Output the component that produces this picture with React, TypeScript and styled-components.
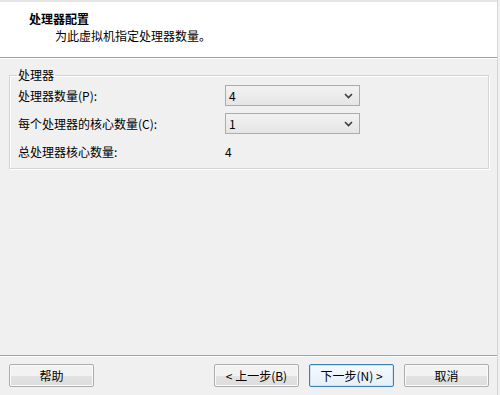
import React from 'react';
import styled, { createGlobalStyle } from 'styled-components';

const GlobalStyle = createGlobalStyle`
  html, body {
    margin: 0;
    padding: 0;
    background: #f0f0f0;
  }
  body {
    font-family: "Noto Sans CJK SC", "Noto Sans", "Liberation Sans", sans-serif;
    font-size: 12px;
    color: #000000;
  }
`;

const Chevron = () => (
  <svg width="9" height="6" viewBox="0 0 9 6">
    <path d="M1 1 L4.5 4.5 L8 1" fill="none" stroke="#3c3c3c" strokeWidth="1.6" />
  </svg>
);

const Combo = ({ value }: { value: string }) => (
  <ComboBox>
    <span>{value}</span>
    <Chevron />
  </ComboBox>
);

const App = () => (
  <Window>
    <GlobalStyle />
    <Header>
      <Title>处理器配置</Title>
      <Subtitle>为此虚拟机指定处理器数量。</Subtitle>
    </Header>
    <Body>
      <Group>
        <Legend>处理器</Legend>
        <Row>
          <Label>处理器数量(P):</Label>
          <Combo value="4" />
        </Row>
        <Row>
          <Label>每个处理器的核心数量(C):</Label>
          <Combo value="1" />
        </Row>
        <Row>
          <Label>总处理器核心数量:</Label>
          <Value>4</Value>
        </Row>
      </Group>
    </Body>
    <Footer>
      <Button>帮助</Button>
      <ButtonGroup>
        <Button>&lt; 上一步(B)</Button>
        <Button $primary>下一步(N) &gt;</Button>
        <Button>取消</Button>
      </ButtonGroup>
    </Footer>
  </Window>
);

export default App;

const Window = styled.div`
  width: 498px;
  height: 395px;
  display: flex;
  flex-direction: column;
  border-right: 1px solid #d6d6d6;
  box-sizing: border-box;
  background: #f0f0f0;
`;

const Header = styled.div`
  height: 58px;
  box-sizing: border-box;
  background: #ffffff;
  border-top: 2px solid #e6e6e6;
  border-bottom: 1px solid #a0a0a0;
  padding: 9px 0 0 29px;
  display: flex;
  flex-direction: column;
`;

const Title = styled.div`
  font-weight: bold;
  line-height: 16px;
`;

const Subtitle = styled.div`
  padding-left: 26px;
  margin-top: 1px;
  line-height: 16px;
`;

const Body = styled.div`
  flex: 1;
  border-top: 1px solid #ffffff;
  padding: 9px 8px 0 9px;
`;

const Group = styled.fieldset`
  margin: 0;
  width: 480px;
  box-sizing: border-box;
  padding: 3px 8px 6px 8px;
  border: 1px solid #d5d5d5;
  box-shadow: inset 1px 1px 0 #ffffff, 1px 1px 0 #ffffff;
  display: flex;
  flex-direction: column;
  gap: 7px;
`;

const Legend = styled.legend`
  padding: 0 1px;
  margin-left: -1px;
  line-height: 14px;
`;

const Row = styled.div`
  display: grid;
  grid-template-columns: 207px 135px;
  align-items: center;
  height: 21px;
`;

const Label = styled.span`
  line-height: 16px;
`;

const Value = styled.span`
  line-height: 16px;
`;

const ComboBox = styled.div`
  height: 21px;
  box-sizing: border-box;
  border: 1px solid #acacac;
  background: linear-gradient(#f2f2f2, #e5e5e5);
  display: flex;
  align-items: center;
  justify-content: space-between;
  padding: 0 6px 0 3px;
  line-height: 16px;
`;

const Footer = styled.div`
  height: 40px;
  box-sizing: border-box;
  border-top: 1px solid #a0a0a0;
  box-shadow: inset 0 1px 0 #ffffff;
  padding: 8px 8px 0 9px;
  display: flex;
  justify-content: space-between;
  align-items: flex-start;
`;

const ButtonGroup = styled.div`
  display: flex;
  gap: 10px;
`;

const Button = styled.button<{ $primary?: boolean }>`
  width: 85px;
  height: 23px;
  box-sizing: border-box;
  font-family: inherit;
  font-size: 12px;
  line-height: 16px;
  color: #000000;
  border-radius: 2px;
  padding: 0;
  border: 1px solid ${(p) => (p.$primary ? '#3c7fb1' : '#acacac')};
  background: ${(p) =>
    p.$primary
      ? 'linear-gradient(#f4f9fd, #e6f0f8)'
      : 'linear-gradient(#f2f2f2 50%, #e3e3e3 50%, #dcdcdc)'};
  box-shadow: inset 0 0 0 1px ${(p) => (p.$primary ? '#cfe3f3' : '#fbfbfb')};
`;
